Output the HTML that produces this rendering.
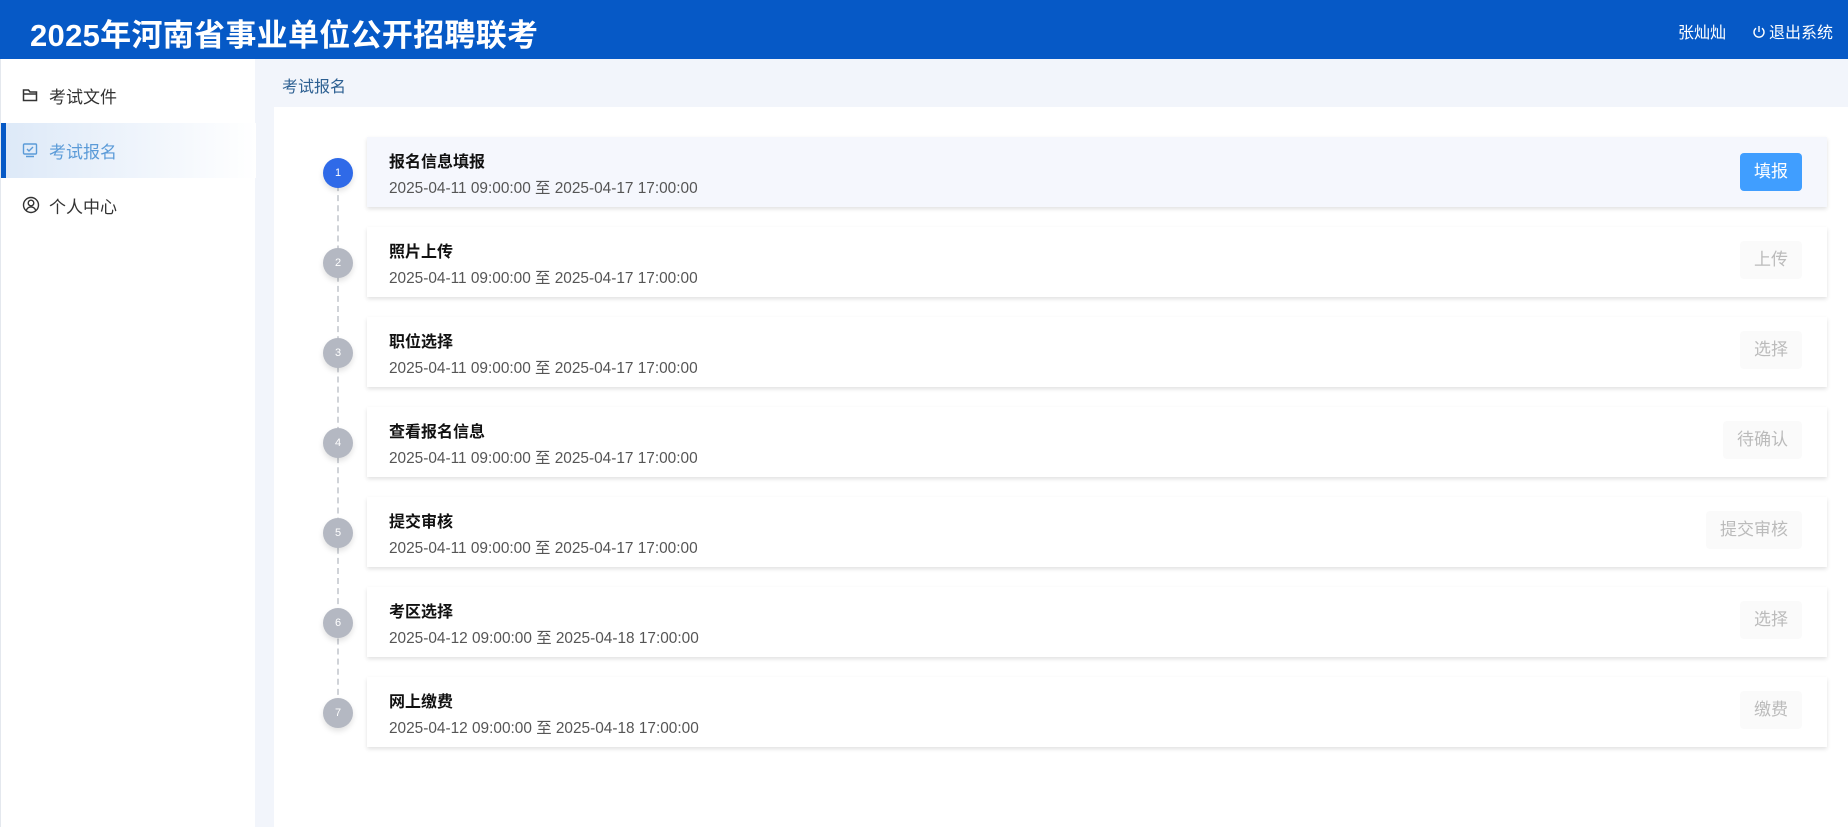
<!DOCTYPE html>
<html><head><meta charset="utf-8"><style>
*{margin:0;padding:0;box-sizing:border-box}
body{width:1848px;height:827px;overflow:hidden;background:#f2f5fb;font-family:"Liberation Sans","Noto Sans CJK SC",sans-serif;position:relative}
.hdr{position:absolute;left:0;top:0;width:1848px;height:59px;background:#0659c6}
.hdr h1{position:absolute;left:30px;top:10px;color:#fff;font-size:31px;font-weight:bold;letter-spacing:0.3px}
.user{position:absolute;left:1678px;top:19px;color:#fff;font-size:16px}
.out{position:absolute;left:1752px;top:19px;color:#fff;font-size:16px}
.side{position:absolute;left:0;top:59px;width:255px;height:768px;background:#fff;border-left:1px solid #e4e8ee}
.item{position:absolute;left:0;width:255px;height:55px;font-size:17px;color:#333;display:flex;align-items:center;padding-left:48px}
.item svg{position:absolute;left:21px;top:19px}
.item.act{background:linear-gradient(90deg,#dde9f8,#fff);color:#5b9bd8;border-left:5px solid #0659c6;padding-left:43px}
.item.act svg{left:16px}
.crumb{position:absolute;left:282px;top:73px;font-size:16px;color:#2c5f91}
.panel{position:absolute;left:274px;top:107px;width:1574px;height:720px;background:#fff}
.line{position:absolute;left:337px;top:175px;height:540px;border-left:2px dashed #d0d3d8}
.dot{position:absolute;left:323px;width:30px;height:30px;border-radius:50%;background:#b4b8c2;color:#fff;font-size:11px;text-align:center;line-height:30px;box-shadow:0 3px 6px rgba(0,0,0,.12)}
.dot.a{background:#2f6ae8}
.card{position:absolute;left:367px;width:1460px;height:70px;background:#fff;box-shadow:0 2px 4px rgba(0,0,0,.12)}
.card.a{background:#f5f7fd}
.card .t{position:absolute;left:22px;top:11px;font-size:16px;font-weight:bold;color:#111}
.card .d{position:absolute;left:22px;top:39px;font-size:15.4px;color:#555}
.btn{position:absolute;top:14px;right:25px;height:38px;padding:0 14px;line-height:38px;font-size:17px;color:#bbb;background:#fafafa;border-radius:4px}
.btn.a{background:#409eff;color:#fff;top:16px}
</style></head><body>
<div class="hdr"><h1>2025年河南省事业单位公开招聘联考</h1>
<div class="user">张灿灿</div>
<div class="out"><svg width="14" height="14" viewBox="0 0 14 14" style="vertical-align:-1px;margin-right:3px"><path d="M4 3.2A5 5 0 1 0 10 3.2" fill="none" stroke="#fff" stroke-width="1.4"/><path d="M7 1v6" stroke="#fff" stroke-width="1.4"/></svg>退出系统</div></div>
<div class="side">
<div class="item" style="top:9px"><svg width="16" height="16" viewBox="0 0 16 16"><path d="M1.5 3h5l1.5 2h6.5v8.5h-13z M1.5 7h13" fill="none" stroke="#333" stroke-width="1.5"/></svg>考试文件</div>
<div class="item act" style="top:64px"><svg width="16" height="16" viewBox="0 0 16 16"><rect x="1.5" y="2" width="13" height="10" rx="1" fill="none" stroke="#5b9bd8" stroke-width="1.4"/><path d="M5 7l2 2 4-4M4 14.5h8" fill="none" stroke="#5b9bd8" stroke-width="1.4"/></svg>考试报名</div>
<div class="item" style="top:119px"><svg width="18" height="18" viewBox="0 0 18 18" style="top:18px"><circle cx="9" cy="9" r="7.5" fill="none" stroke="#333" stroke-width="1.4"/><circle cx="9" cy="7" r="2.8" fill="none" stroke="#333" stroke-width="1.4"/><path d="M4.2 14.5c1-2.5 2.7-3.6 4.8-3.6s3.8 1.1 4.8 3.6" fill="none" stroke="#333" stroke-width="1.4"/></svg>个人中心</div>
</div>
<div class="crumb">考试报名</div>
<div class="panel"></div>
<div class="line"></div>

<div class="dot a" style="top:158px">1</div>
<div class="card a" style="top:137px"><div class="t">报名信息填报</div><div class="d">2025-04-11 09:00:00 至 2025-04-17 17:00:00</div><div class="btn a">填报</div></div>
<div class="dot" style="top:248px">2</div>
<div class="card" style="top:227px"><div class="t">照片上传</div><div class="d">2025-04-11 09:00:00 至 2025-04-17 17:00:00</div><div class="btn">上传</div></div>
<div class="dot" style="top:338px">3</div>
<div class="card" style="top:317px"><div class="t">职位选择</div><div class="d">2025-04-11 09:00:00 至 2025-04-17 17:00:00</div><div class="btn">选择</div></div>
<div class="dot" style="top:428px">4</div>
<div class="card" style="top:407px"><div class="t">查看报名信息</div><div class="d">2025-04-11 09:00:00 至 2025-04-17 17:00:00</div><div class="btn">待确认</div></div>
<div class="dot" style="top:518px">5</div>
<div class="card" style="top:497px"><div class="t">提交审核</div><div class="d">2025-04-11 09:00:00 至 2025-04-17 17:00:00</div><div class="btn">提交审核</div></div>
<div class="dot" style="top:608px">6</div>
<div class="card" style="top:587px"><div class="t">考区选择</div><div class="d">2025-04-12 09:00:00 至 2025-04-18 17:00:00</div><div class="btn">选择</div></div>
<div class="dot" style="top:698px">7</div>
<div class="card" style="top:677px"><div class="t">网上缴费</div><div class="d">2025-04-12 09:00:00 至 2025-04-18 17:00:00</div><div class="btn">缴费</div></div>
</body></html>
